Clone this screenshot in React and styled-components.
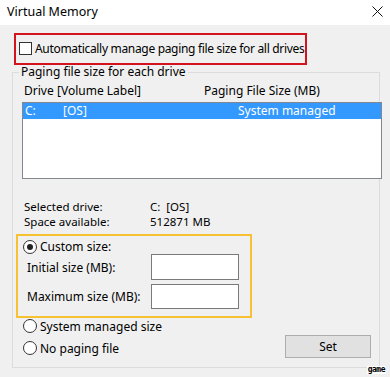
import React from "react";
import styled, { createGlobalStyle } from "styled-components";

const GlobalStyle = createGlobalStyle`
  html, body {
    margin: 0;
    padding: 0;
    background: #f0f0f0;
  }
  * {
    box-sizing: border-box;
  }
`;

const Window = styled.div`
  position: relative;
  width: 390px;
  height: 377px;
  background: #f0f0f0;
  font-family: "Noto Sans", "Open Sans", sans-serif;
  font-size: 12px;
  color: #000;
  overflow: hidden;
`;

const TitleBar = styled.div`
  height: 25px;
  background: #fff;
  display: flex;
  align-items: center;
  justify-content: space-between;
  padding: 0 7px 2px 7px;
  font-size: 12.5px;
`;

const CloseIcon = () => (
  <svg width="11" height="11" viewBox="0 0 11 11">
    <path d="M0.5 0.5 L10.5 10.5 M10.5 0.5 L0.5 10.5" stroke="#111" strokeWidth="1" fill="none" />
  </svg>
);

const HighlightBox = styled.div`
  display: flex;
  align-items: center;
  gap: 3px;
  margin: 8px 0 0 14px;
  width: 293px;
  height: 32px;
  padding: 0 0 1px 3px;
  border: 2px solid ${(p) => p.color};
`;

const CheckBox = styled.span`
  width: 13px;
  height: 13px;
  border: 1px solid #333;
  background: #fff;
  flex: none;
`;

const CheckLabel = styled.span`
  white-space: nowrap;
  letter-spacing: -0.32px;
`;

const Group = styled.fieldset`
  margin: 0 0 0 12px;
  width: 368px;
  height: 303px;
  padding: 4px 0 0 3px;
  border: 1px solid #dcdcdc;
  min-width: 0;
`;

const Legend = styled.legend`
  margin-left: 3px;
  padding: 0 2px;
  line-height: 14px;
`;

const HeaderRow = styled.div`
  display: flex;
  height: 15px;
  line-height: 15px;
  margin-left: 8px;
`;

const Cell = styled.span`
  width: ${(p) => p.w || "auto"};
  flex: none;
  white-space: nowrap;
`;

const ListBox = styled.div`
  margin: 4px 0 0 6px;
  width: 360px;
  height: 77px;
  background: #fff;
  border: 1px solid #828790;
`;

const ListRow = styled.div`
  display: flex;
  height: 16px;
  line-height: 15px;
  padding-left: 2px;
  background: ${(p) => (p.selected ? "#3399ff" : "transparent")};
  color: ${(p) => (p.selected ? "#fff" : "#000")};
`;

const InfoBlock = styled.div`
  margin: 20px 0 0 8px;
`;

const InfoRow = styled.div`
  display: flex;
  height: 15px;
  line-height: 15px;
  font-size: 11.5px;
`;

const SizeBox = styled.div`
  margin-top: 5px;
  width: 236px;
  height: 84px;
  border: 2px solid ${(p) => p.color};
  padding: 3px 0 0 5px;
`;

const RadioRow = styled.label`
  display: flex;
  align-items: center;
  gap: 3px;
  height: ${(p) => p.h || "16px"};
`;

const Radio = styled.span`
  position: relative;
  width: 14px;
  height: 14px;
  border: 1px solid #333;
  border-radius: 50%;
  background: #fff;
  flex: none;
  &::after {
    content: "";
    display: ${(p) => (p.checked ? "block" : "none")};
    position: absolute;
    left: 3px;
    top: 3px;
    width: 6px;
    height: 6px;
    border-radius: 50%;
    background: #222;
  }
`;

const FieldRow = styled.div`
  display: flex;
  align-items: center;
  height: ${(p) => p.h};
  margin-top: ${(p) => p.mt || "0"};
  padding-left: 4px;
`;

const FieldLabel = styled.span`
  width: 124px;
  flex: none;
`;

const TextInput = styled.div`
  width: 88px;
  height: 100%;
  background: #fff;
  border: 1px solid #7a7a7a;
`;

const BottomArea = styled.div`
  display: flex;
  justify-content: space-between;
  align-items: flex-start;
`;

const RadioColumn = styled.div`
  display: flex;
  flex-direction: column;
  gap: 6px;
  margin-left: 7px;
`;

const Button = styled.div`
  margin: 17px 8px 0 0;
  width: 86px;
  height: 23px;
  display: flex;
  align-items: center;
  justify-content: center;
  background: #e1e1e1;
  border: 1px solid #adadad;
`;

const Watermark = styled.span`
  position: absolute;
  right: 4px;
  bottom: 3px;
  padding: 0 1px;
  background: #fff;
  font-family: "DejaVu Sans Mono", monospace;
  font-weight: bold;
  font-size: 8px;
  line-height: 8px;
  letter-spacing: -0.5px;
`;

export default function App() {
  return (
    <Window>
      <GlobalStyle />
      <TitleBar>
        <span>Virtual Memory</span>
        <CloseIcon />
      </TitleBar>

      <HighlightBox color="#d3141c">
        <CheckBox />
        <CheckLabel>Automatically manage paging file size for all drives</CheckLabel>
      </HighlightBox>

      <Group>
        <Legend>Paging file size for each drive</Legend>
        <HeaderRow>
          <Cell w="33px">Drive</Cell>
          <Cell w="147px">[Volume Label]</Cell>
          <Cell>Paging File Size (MB)</Cell>
        </HeaderRow>
        <ListBox>
          <ListRow selected>
            <Cell w="38px">C:</Cell>
            <Cell w="175px">[OS]</Cell>
            <Cell>System managed</Cell>
          </ListRow>
        </ListBox>

        <InfoBlock>
          <InfoRow>
            <Cell w="126px">Selected drive:</Cell>
            <Cell>C:&nbsp;&nbsp;[OS]</Cell>
          </InfoRow>
          <InfoRow>
            <Cell w="126px">Space available:</Cell>
            <Cell>512871 MB</Cell>
          </InfoRow>
        </InfoBlock>

        <SizeBox color="#f6c232">
          <RadioRow h="15px">
            <Radio checked />
            <span>Custom size:</span>
          </RadioRow>
          <FieldRow h="26px">
            <FieldLabel>Initial size (MB):</FieldLabel>
            <TextInput />
          </FieldRow>
          <FieldRow h="25px" mt="4px">
            <FieldLabel>Maximum size (MB):</FieldLabel>
            <TextInput />
          </FieldRow>
        </SizeBox>

        <BottomArea>
          <RadioColumn>
            <RadioRow>
              <Radio />
              <span>System managed size</span>
            </RadioRow>
            <RadioRow>
              <Radio />
              <span>No paging file</span>
            </RadioRow>
          </RadioColumn>
          <Button>Set</Button>
        </BottomArea>
      </Group>

      <Watermark>game</Watermark>
    </Window>
  );
}
